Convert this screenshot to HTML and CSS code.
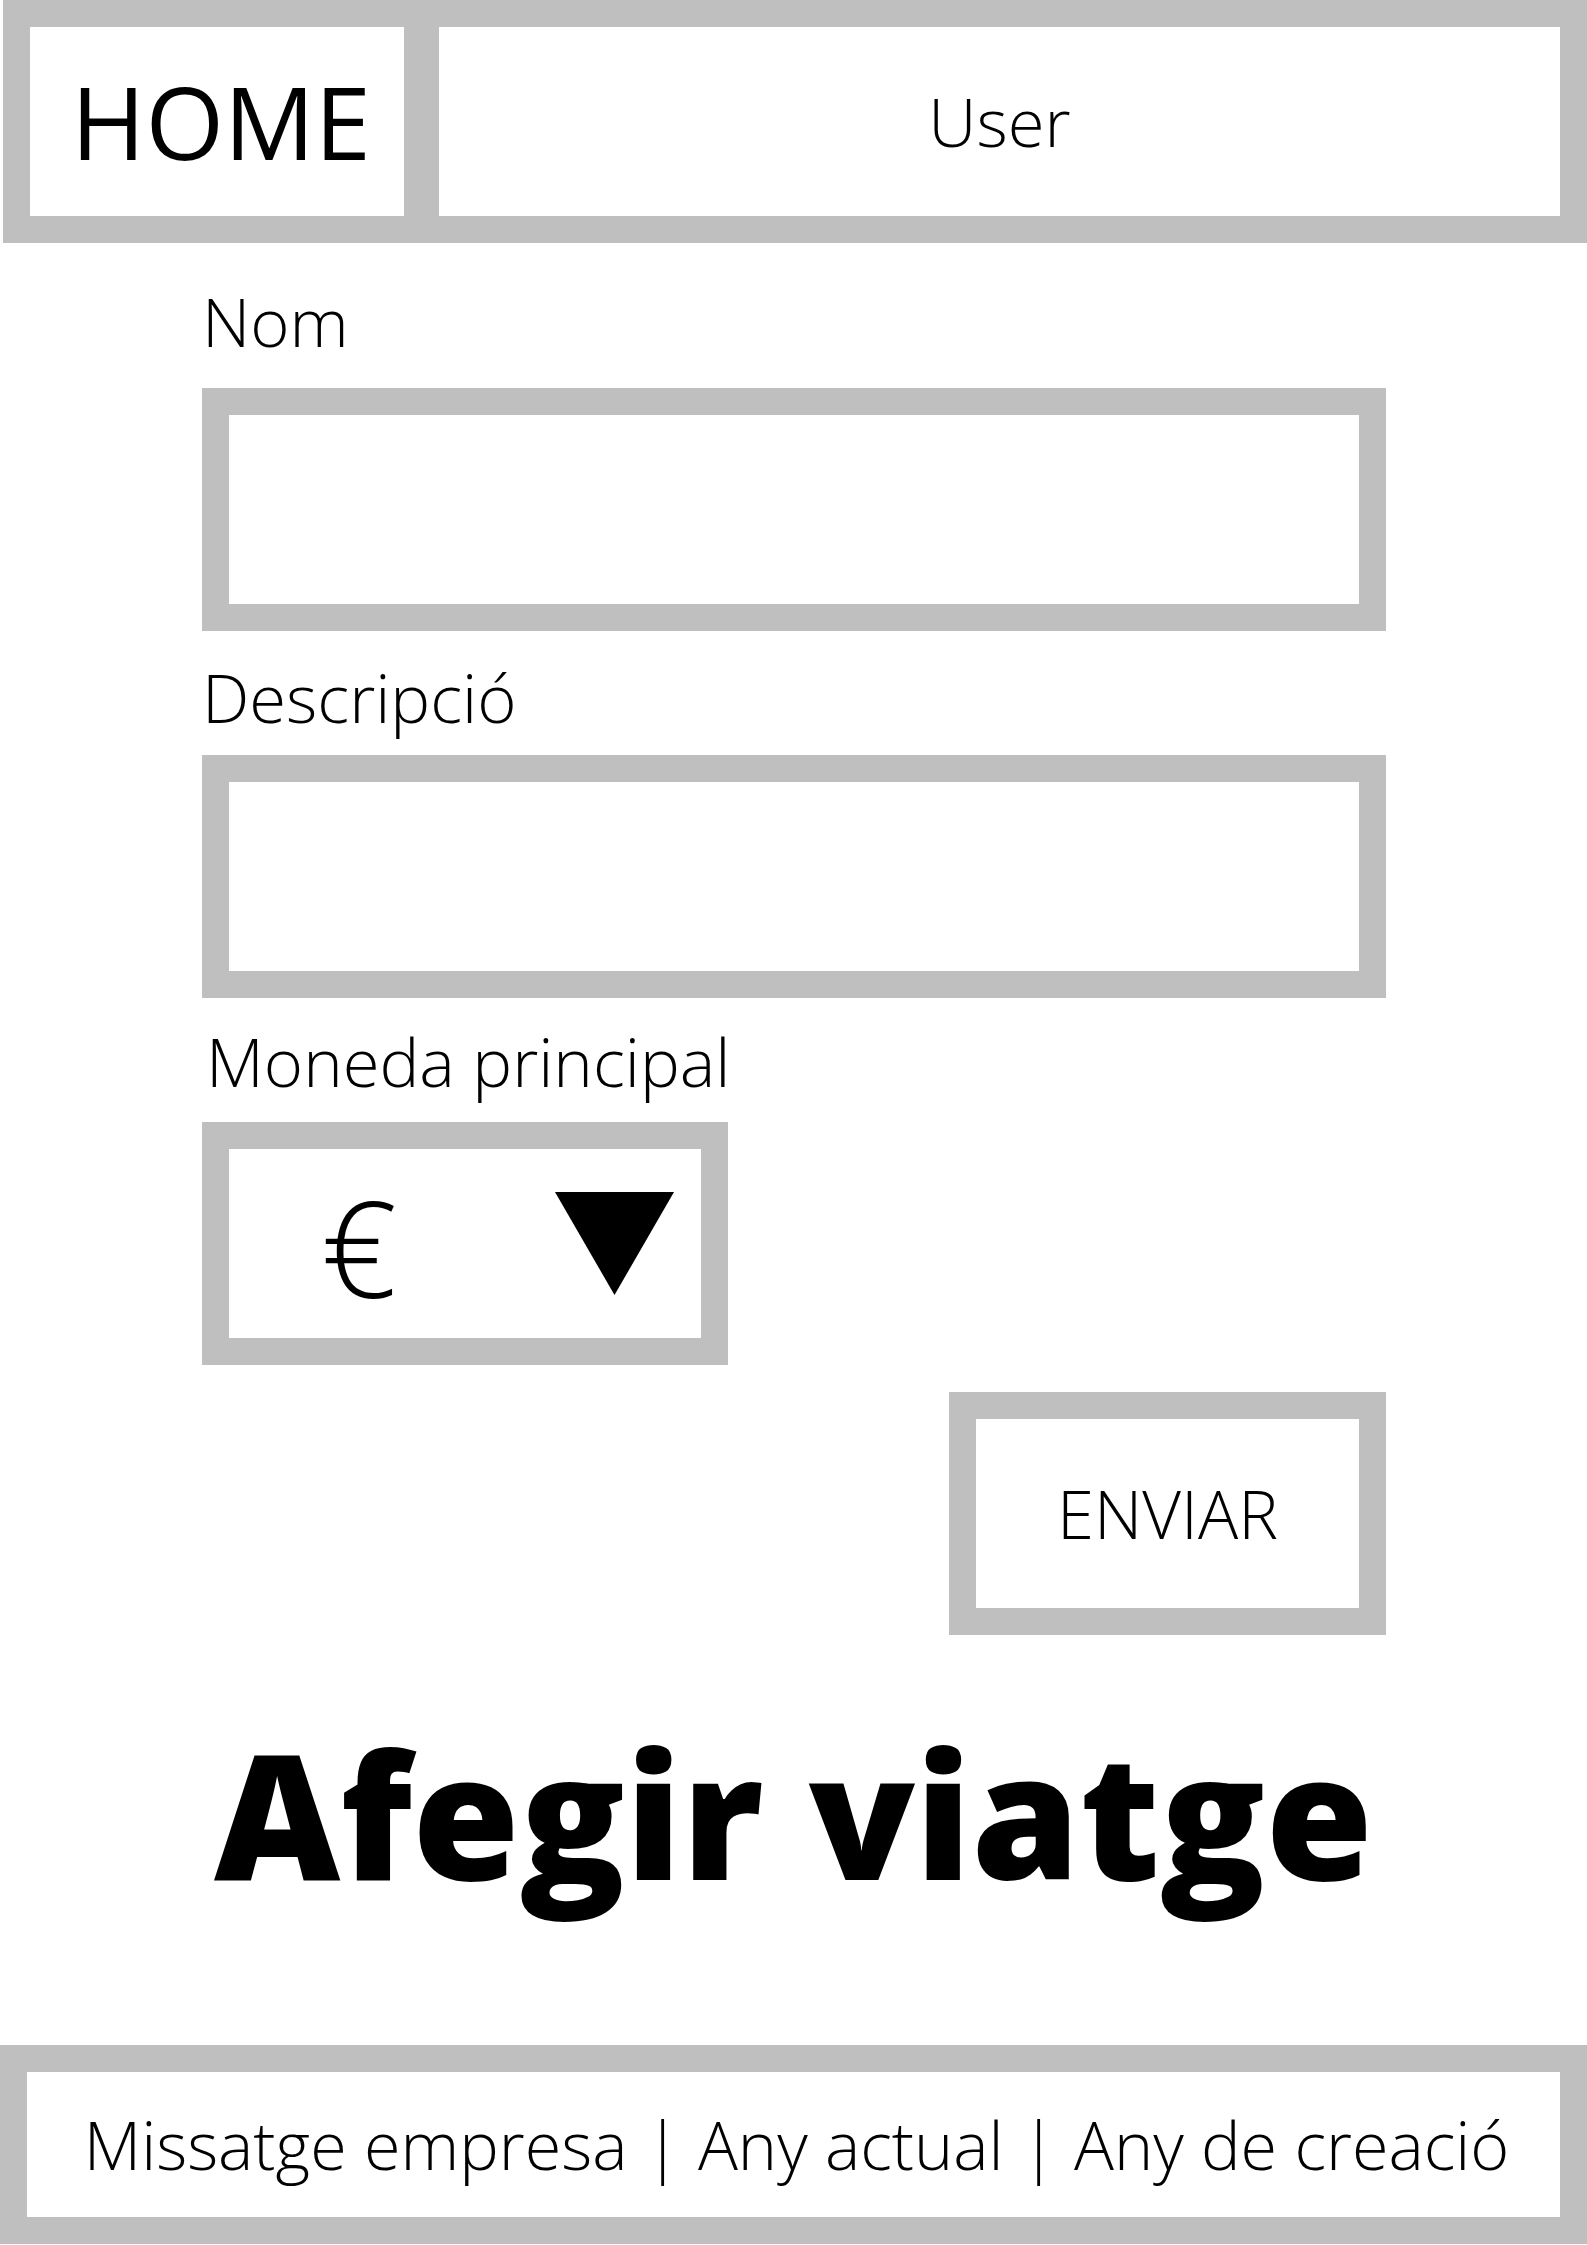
FILE: index.html
```html
<!DOCTYPE html>
<html lang="ca">
<head>
<meta charset="utf-8">
<title>Afegir viatge</title>
<link rel="stylesheet" href="styles.css">
</head>
<body>
<header class="topbar">
  <div class="home">HOME</div>
  <div class="user">User</div>
</header>
<main class="form">
  <div class="label label-nom">Nom</div>
  <div class="field field-nom"></div>
  <div class="label label-desc">Descripció</div>
  <div class="field field-desc"></div>
  <div class="label label-moneda">Moneda principal</div>
  <div class="select">
    <span class="euro">€</span>
    <svg class="arrow" width="119" height="103" viewBox="0 0 119 103"><polygon points="0,0 119,0 59.5,103" fill="#000"/></svg>
  </div>
  <div class="button-row">
    <div class="button">ENVIAR</div>
  </div>
</main>
<h1 class="title">Afegir viatge</h1>
<footer class="footer">Missatge empresa | Any actual | Any de creació</footer>
</body>
</html>
```
FILE: styles.css
```css
html, body {
  margin: 0;
  padding: 0;
  background: #fff;
}
body {
  font-family: "Open Sans", "DejaVu Sans", sans-serif;
  color: #000;
  width: 1587px;
}
.topbar {
  display: flex;
  gap: 35px;
  margin-left: 3px;
  padding: 27px;
  height: 243px;
  box-sizing: border-box;
  background: #bfbfbf;
}
.home {
  width: 374px;
  background: #fff;
  display: flex;
  align-items: center;
  justify-content: center;
  font-size: 101px;
  font-weight: 400;
  line-height: 1;
  padding-left: 8px;
  box-sizing: border-box;
}
.user {
  flex: 1;
  background: #fff;
  display: flex;
  align-items: center;
  justify-content: center;
  font-size: 67px;
  font-weight: 300;
  line-height: 1;
}
.form {
  width: 1184px;
  margin-left: 202px;
  display: flex;
  flex-direction: column;
}
.label {
  font-size: 67px;
  font-weight: 300;
  line-height: 91px;
  white-space: nowrap;
}
.label-nom { margin-top: 33px; }
.label-desc { margin-top: 21px; }
.label-moneda {
  margin-top: 18px;
  margin-left: 4px;
}
.field {
  height: 243px;
  border: 27px solid #bfbfbf;
  box-sizing: border-box;
}
.field-nom { margin-top: 21px; }
.field-desc { margin-top: 12px; }
.select {
  margin-top: 15px;
  width: 526px;
  height: 243px;
  border: 27px solid #bfbfbf;
  box-sizing: border-box;
  display: flex;
  align-items: center;
  padding-left: 92px;
  padding-right: 27px;
  justify-content: space-between;
}
.euro {
  font-size: 133px;
  font-weight: 300;
  line-height: 1;
  position: relative;
  top: 3px;
}
.arrow {
  display: block;
}
.button-row {
  display: flex;
  justify-content: flex-end;
  margin-top: 27px;
}
.button {
  width: 437px;
  height: 243px;
  border: 27px solid #bfbfbf;
  box-sizing: border-box;
  display: flex;
  align-items: center;
  justify-content: center;
  font-size: 67px;
  font-weight: 300;
  line-height: 1;
}
.title {
  margin: 59px 0 0 0;
  text-align: center;
  font-size: 174px;
  font-weight: 800;
  line-height: 237px;
  white-space: nowrap;
}
.footer {
  margin-top: 114px;
  height: 199px;
  border: 27px solid #bfbfbf;
  box-sizing: border-box;
  display: flex;
  align-items: center;
  justify-content: center;
  font-size: 66.5px;
  font-weight: 300;
  line-height: 1;
  white-space: nowrap;
  padding-left: 6px;
}
```
